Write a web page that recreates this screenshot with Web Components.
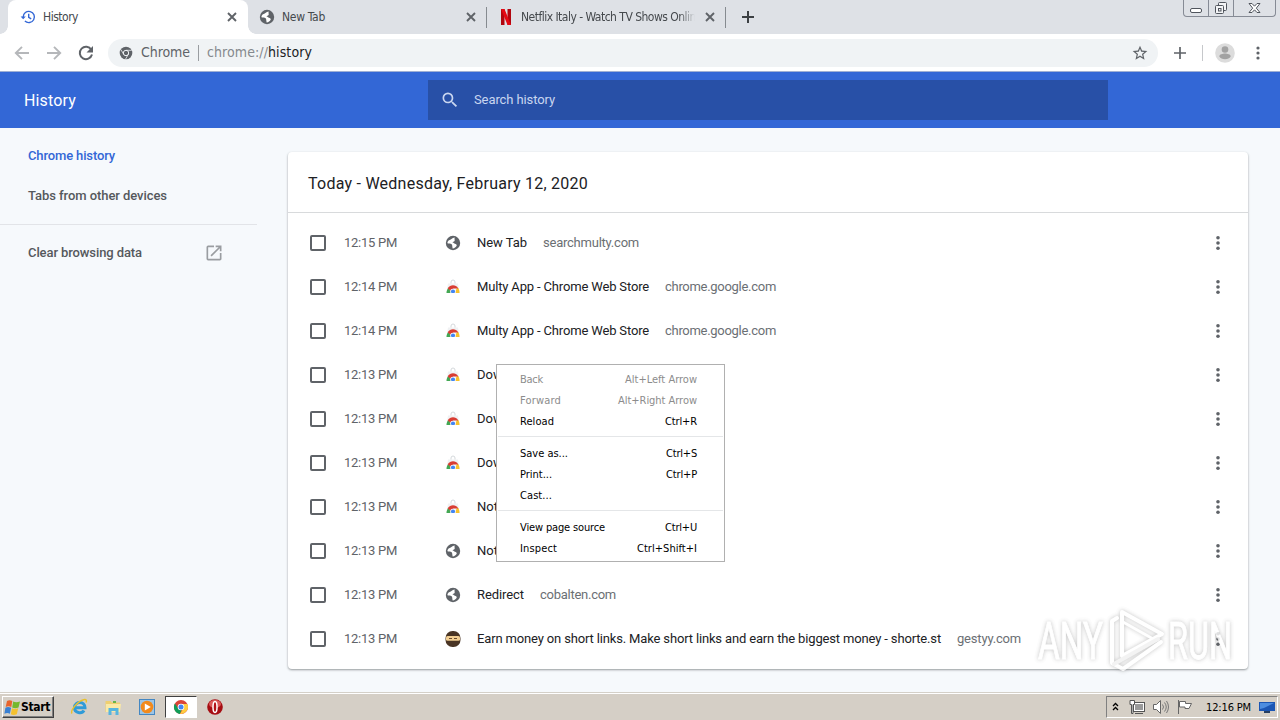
<!DOCTYPE html>
<html lang="en">
<head>
<meta charset="utf-8">
<title>History</title>
<style>
  html, body {
    margin: 0;
    height: 100%;
    overflow: hidden;
  }
</style>
</head>
<body>
<history-desktop></history-desktop>

<template id="history-desktop">
  <style>
    :host {
      display: flex;
      flex-direction: column;
      position: relative;
      width: 1280px;
      height: 720px;
      overflow: hidden;
      background: #f6f9fc;
      font-family: Roboto, sans-serif;
      font-size: 13px;
    }
    main {
      display: flex;
      flex: 1;
      min-height: 0;
    }
    context-menu {
      position: absolute;
      left: 496px;
      top: 364px;
    }
    water-mark {
      position: absolute;
      left: 1030px;
      top: 600px;
    }
  </style>
  <tab-strip></tab-strip>
  <tool-bar></tool-bar>
  <history-header></history-header>
  <main>
    <side-bar></side-bar>
    <history-card></history-card>
  </main>
  <task-bar></task-bar>
  <context-menu>
    <menu-entry disabled w="23" keys="Alt+Left Arrow" kw="72">Back</menu-entry>
    <menu-entry disabled w="41" keys="Alt+Right Arrow" kw="79">Forward</menu-entry>
    <menu-entry w="34" keys="Ctrl+R" kw="32">Reload</menu-entry>
    <hr>
    <menu-entry w="48" keys="Ctrl+S" kw="31">Save as...</menu-entry>
    <menu-entry w="32" keys="Ctrl+P" kw="31">Print...</menu-entry>
    <menu-entry w="32">Cast...</menu-entry>
    <hr>
    <menu-entry w="85" keys="Ctrl+U" kw="32">View page source</menu-entry>
    <menu-entry w="37" keys="Ctrl+Shift+I" kw="60">Inspect</menu-entry>
  </context-menu>
  <water-mark></water-mark>
</template>

<template id="tab-strip">
  <style>
    :host {
      display: flex;
      height: 34px;
      padding-left: 8px;
      background: #dee1e6;
      box-sizing: border-box;
    }
    .add {
      height: 34px;
      margin-left: 14px;
      color: #3c4043;
    }
    .buttons {
      display: flex;
      height: 16px;
      margin: 0 4px 0 auto;
      border: 1px solid #868b95;
      border-top: 0;
      border-radius: 0 0 4px 4px;
    }
    .buttons ui-icon + ui-icon {
      border-left: 1px solid #868b95;
    }
  </style>
  <browser-tab active icon="history" w="35">History</browser-tab>
  <browser-tab icon="globe" w="43">New Tab</browser-tab>
  <browser-tab icon="netflix" w="181">Netflix Italy - Watch TV Shows Online</browser-tab>
  <ui-icon class="add" name="plus" size="16"></ui-icon>
  <div class="buttons">
    <ui-icon name="minimize" size="24" h="16"></ui-icon>
    <ui-icon name="restore" size="24" h="16"></ui-icon>
    <ui-icon name="winclose" size="41" h="16"></ui-icon>
  </div>
</template>

<template id="browser-tab">
  <style>
    :host {
      display: flex;
      align-items: center;
      position: relative;
      width: 239px;
      height: 34px;
      padding: 0 7px 0 11px;
      box-sizing: border-box;
      color: #45494d;
      font: 12px "DejaVu Sans Condensed", "DejaVu Sans", sans-serif;
    }
    :host([active]) {
      width: 240px;
      padding: 0 8px 0 12px;
      background: #fff;
      border-radius: 8px 8px 0 0;
    }
    /* outward curves at the foot of the active tab */
    :host([active])::before,
    :host([active])::after {
      content: "";
      position: absolute;
      bottom: 0;
      left: -8px;
      width: 8px;
      height: 8px;
      background: radial-gradient(circle at 0 0, transparent 7.5px, #fff 8px);
    }
    :host([active])::after {
      left: auto;
      right: -8px;
      background: radial-gradient(circle at 100% 0, transparent 7.5px, #fff 8px);
    }
    :host(:not([active])) {
      border-right: 1px solid transparent;
      border-image: linear-gradient(transparent 8px, #868b90 8px, #868b90 27px, transparent 27px) 1;
    }
    .title {
      flex: 1;
      margin: 0 7px 0 7px;
      overflow: hidden;
      white-space: nowrap;
    }
    :host([icon="netflix"]) .title {
      -webkit-mask-image: linear-gradient(90deg, #000 91%, transparent);
      mask-image: linear-gradient(90deg, #000 91%, transparent);
    }
    .close {
      color: #5f6368;
    }
  </style>
  <ui-icon class="icon" size="16"></ui-icon>
  <div class="title"><fit-text><slot></slot></fit-text></div>
  <ui-icon class="close" name="close" size="16"></ui-icon>
</template>

<template id="tool-bar">
  <style>
    :host {
      display: flex;
      align-items: center;
      height: 38px;
      padding: 0 13px 0 13px;
      box-sizing: border-box;
      border-bottom: 1px solid #9fb0d4;
      background: #fff;
      color: #5f6368;
      font: 14px "DejaVu Sans Condensed", "DejaVu Sans", sans-serif;
    }
    .dim {
      color: #b5b7ba;
    }
    .gap {
      margin-left: 14px;
    }
    .omnibox {
      display: flex;
      align-items: center;
      flex: 1;
      height: 28px;
      margin: 0 13px 0 13px;
      padding: 0 10px 0 10px;
      border-radius: 14px;
      background: #f0f3f5;
      white-space: nowrap;
    }
    .omnibox fit-text {
      margin-top: -2px;
    }
    .omnibox fit-text:first-of-type {
      margin-left: 7px;
    }
    .sep {
      width: 1px;
      height: 16px;
      margin: 0 8px;
      background: #9a9da1;
    }
    .url {
      color: #85898d;
    }
    .path {
      color: #202124;
    }
    .star {
      margin-left: auto;
    }
    .line {
      width: 1px;
      height: 16px;
      margin: 0 12px 0 13px;
      background: #c6c8cb;
    }
  </style>
  <ui-icon class="dim" name="back" size="18"></ui-icon>
  <ui-icon class="dim gap" name="forward" size="18"></ui-icon>
  <ui-icon class="gap" name="reload" size="18"></ui-icon>
  <div class="omnibox">
    <ui-icon name="chromegrey" size="16"></ui-icon>
    <fit-text w="49">Chrome</fit-text>
    <span class="sep"></span>
    <fit-text class="url" w="61">chrome://</fit-text><fit-text class="path" w="44">history</fit-text>
    <ui-icon class="star" name="star" size="16"></ui-icon>
  </div>
  <ui-icon name="thinplus" size="18"></ui-icon>
  <span class="line"></span>
  <ui-icon name="avatar" size="20"></ui-icon>
  <ui-icon class="gap" name="dots" size="18"></ui-icon>
</template>

<template id="history-header">
  <style>
    :host {
      display: flex;
      align-items: center;
      height: 56px;
      background: #3367d6;
      color: #fff;
    }
    .title {
      width: 404px;
      padding-left: 24px;
      font-size: 16px;
    }
    .search {
      display: flex;
      align-items: center;
      width: 680px;
      height: 40px;
      padding-left: 12px;
      box-sizing: border-box;
      background: #2850a7;
      color: #c9d6f0;
    }
    .search fit-text {
      margin: -2px 0 0 14px;
    }
  </style>
  <div class="title"><fit-text w="52">History</fit-text></div>
  <div class="search">
    <ui-icon name="search" size="20"></ui-icon>
    <fit-text w="81">Search history</fit-text>
  </div>
</template>

<template id="side-bar">
  <style>
    :host {
      display: block;
      width: 257px;
      color: #55585c;
      font-weight: 500;
    }
    .item {
      display: flex;
      align-items: center;
      height: 40px;
      padding-left: 28px;
    }
    .item:first-of-type {
      margin-top: 8px;
      color: #3367d6;
    }
    .item fit-text {
      margin-top: -2px;
    }
    .rule {
      height: 1px;
      margin: 8px 0;
      background: #e2e4e8;
    }
    ui-icon {
      margin: 0 33px 0 auto;
      color: #9a9da1;
    }
  </style>
  <div class="item"><fit-text w="87">Chrome history</fit-text></div>
  <div class="item"><fit-text w="139">Tabs from other devices</fit-text></div>
  <div class="rule"></div>
  <div class="item"><fit-text w="114">Clear browsing data</fit-text><ui-icon name="launch" size="20"></ui-icon></div>
</template>

<template id="history-card">
  <style>
    :host {
      display: block;
      width: 960px;
      height: 517px;
      margin: 24px 0 0 31px;
      border-radius: 4px;
      background: #fff;
      box-shadow: 0 1px 2px rgba(60, 64, 67, .4), 0 1px 3px rgba(60, 64, 67, .15);
    }
    .heading {
      display: flex;
      align-items: center;
      height: 60px;
      padding: 3px 20px 0;
      box-sizing: border-box;
      color: #202124;
      font-size: 16px;
    }
    .rows {
      padding-top: 8px;
      border-top: 1px solid #d8dadc;
    }
  </style>
  <div class="heading"><fit-text w="280">Today - Wednesday, February 12, 2020</fit-text></div>
  <div class="rows">
    <history-item time="12:15 PM" icon="globe" w="50" site="searchmulty.com" sw="96">New Tab</history-item>
    <history-item time="12:14 PM" icon="webstore" w="172" site="chrome.google.com" sw="111">Multy App - Chrome Web Store</history-item>
    <history-item time="12:14 PM" icon="webstore" w="172" site="chrome.google.com" sw="111">Multy App - Chrome Web Store</history-item>
    <history-item time="12:13 PM" icon="webstore">Dow</history-item>
    <history-item time="12:13 PM" icon="webstore">Dow</history-item>
    <history-item time="12:13 PM" icon="webstore">Dow</history-item>
    <history-item time="12:13 PM" icon="webstore">Not</history-item>
    <history-item time="12:13 PM" icon="globe">Not</history-item>
    <history-item time="12:13 PM" icon="globe" w="47" site="cobalten.com" sw="76">Redirect</history-item>
    <history-item time="12:13 PM" icon="ninja" w="464" site="gestyy.com" sw="64">Earn money on short links. Make short links and earn the biggest money - shorte.st</history-item>
  </div>
</template>

<template id="history-item">
  <style>
    :host {
      display: flex;
      align-items: center;
      height: 44px;
      padding: 0 20px 0 22px;
      color: #202124;
      white-space: nowrap;
    }
    .box {
      width: 12px;
      height: 12px;
      border: 2px solid #5f6368;
      border-radius: 2px;
    }
    .time {
      width: 101px;
      margin: -2px 0 0 18px;
      color: #5f6368;
    }
    .name {
      margin: -2px 16px 0;
    }
    .site {
      margin-top: -2px;
      color: #6b6f74;
    }
    .more {
      margin-left: auto;
      color: #5f6368;
    }
  </style>
  <span class="box"></span>
  <span class="time"><fit-text w="53" class="clock"></fit-text></span>
  <ui-icon class="icon" size="16"></ui-icon>
  <fit-text class="name"><slot></slot></fit-text>
  <fit-text class="site"></fit-text>
  <ui-icon class="more" name="bigdots" size="20"></ui-icon>
</template>

<template id="context-menu">
  <style>
    :host {
      display: block;
      width: 229px;
      height: 198px;
      padding: 4px 1px;
      box-sizing: border-box;
      border: 1px solid #b0b0b0;
      background: #fff;
      color: #000;
      font: 11px "DejaVu Sans Condensed", "DejaVu Sans", sans-serif;
    }
    ::slotted(hr) {
      height: 1px;
      margin: 4px 0 6px;
      border: 0;
      background: #e4e6e8;
    }
  </style>
  <slot></slot>
</template>

<template id="menu-entry">
  <style>
    :host {
      display: flex;
      justify-content: space-between;
      align-items: center;
      height: 21px;
      padding: 0 26px 0 22px;
      white-space: nowrap;
    }
    :host([disabled]) {
      color: #8c8c8c;
    }
  </style>
  <fit-text class="name"><slot></slot></fit-text>
  <fit-text class="keys"></fit-text>
</template>

<template id="task-bar">
  <style>
    :host {
      display: flex;
      align-items: center;
      height: 28px;
      padding: 2px 2px 1px;
      box-sizing: border-box;
      border-top: 1px solid #d4d0c8;
      background: #d5cfc6;
      box-shadow: inset 0 1px #fff;
      color: #000;
      font: 11px "DejaVu Sans Condensed", "DejaVu Sans", sans-serif;
    }
    .start {
      display: flex;
      align-items: center;
      width: 52px;
      height: 22px;
      padding-left: 1px;
      box-sizing: border-box;
      border: 1px solid;
      border-color: #fff #404040 #404040 #fff;
      box-shadow: inset -1px -1px #808080;
      font-weight: bold;
      font-size: 12px;
    }
    .start fit-text {
      margin: -1px 0 0;
    }
    .apps {
      display: flex;
      margin-left: 9px;
    }
    .apps ui-icon {
      width: 32px;
      height: 22px;
      margin-right: 2px;
      box-sizing: border-box;
    }
    .apps .current {
      border: 1px solid;
      border-color: #404040 #fff #fff #404040;
      background: #fff;
    }
    .tray {
      display: flex;
      align-items: center;
      width: 172px;
      height: 22px;
      margin-left: auto;
      box-sizing: border-box;
      border: 1px solid;
      border-color: #808080 #fff #fff #808080;
    }
    .tray ui-icon {
      margin-left: 8px;
    }
    .tray .up {
      margin-left: 4px;
    }
    .tray .net {
      margin-left: 9px;
    }
    .tray fit-text {
      margin: 0 0 0 13px;
    }
  </style>
  <div class="start"><ui-icon name="windows" size="17"></ui-icon><fit-text w="29">Start</fit-text></div>
  <div class="apps">
    <ui-icon name="ie" size="18"></ui-icon>
    <ui-icon name="folder" size="18"></ui-icon>
    <ui-icon name="player" size="18"></ui-icon>
    <ui-icon class="current" name="chrome" size="16"></ui-icon>
    <ui-icon name="opera" size="18"></ui-icon>
  </div>
  <div class="tray">
    <ui-icon class="up" name="chevrons" size="9" h="16"></ui-icon>
    <ui-icon class="net" name="network" size="16"></ui-icon>
    <ui-icon name="speaker" size="16"></ui-icon>
    <ui-icon name="flag" size="16"></ui-icon>
    <fit-text w="45">12:16 PM</fit-text>
    <ui-icon name="desktop" size="16"></ui-icon>
  </div>
</template>

<template id="water-mark">
  <style>
    :host {
      display: block;
      width: 210px;
      height: 76px;
      filter: drop-shadow(0 0 2px rgba(90, 90, 90, .45));
      opacity: .8;
    }
    text {
      fill: #fff;
      stroke: #fff;
      stroke-width: 1;
      font: 52px "Liberation Sans Narrow", Roboto, sans-serif;
    }
  </style>
  <svg width="210" height="76" viewBox="0 0 210 76">
    <text x="8" y="59" textLength="65" lengthAdjust="spacingAndGlyphs">ANY</text>
    <g fill="none" stroke="#fff" stroke-width="4" stroke-linejoin="round" stroke-linecap="round">
      <path d="M87 18l-5 3V63l11 6 38-27"/>
      <path d="M92 56V12L132 34 92 56"/>
      <path d="M93 22L125 40" stroke-width="3"/>
      <path d="M84 64L128 39" stroke="#f1f1f1"/>
    </g>
    <text x="138" y="59" textLength="64" lengthAdjust="spacingAndGlyphs">RUN</text>
  </svg>
</template>

<script>
  // viewBox followed by the markup of each icon
  const ICONS = {
    history: ['0 0 16 16', '<g fill="none" stroke="#3367d6" stroke-width="1.4"><path d="M3.2 8a5.6 5.6 0 1 1 1.7 4"/><path d="M8.7 4.8v3.5l2.5 1.5"/></g><path fill="#3367d6" d="M.6 7.5h5.2L3.2 10.2z"/>'],
    globe: ['0 0 24 24', '<circle cx="12" cy="12" r="10.8" fill="#5f6368"/><path fill="#fff" d="M14.500 3.600C10.500 4 9.500 6.500 7 7.500c-2.500 1-3.500 3-3.300 5 2.300.9 4.500.2 6.300 1.500 1.200 1 .6 3 1.500 6.200 2.500-.2 5-1.700 6-4 .5-1.700-.8-3-2.800-3.200-1.500-.2-2-1.500-3.700-2 1-1.200 2.300-.8 3.300-2 .9-1.200-.5-2.500.2-5.400z"/>'],
    netflix: ['0 0 16 16', '<path fill="#b1060f" d="M3 0h3.500v16H3zM9.500 0H13v16H9.500z"/><path fill="#e50914" d="M3 0h3.500L13 16H9.500z"/>'],
    close: ['0 0 16 16', '<path fill="none" stroke="currentColor" stroke-width="1.900" d="M4 4l8 8M12 4l-8 8"/>'],
    plus: ['0 0 16 16', '<path fill="none" stroke="currentColor" stroke-width="2" d="M8 2v12M2 8h12"/>'],
    thinplus: ['0 0 18 18', '<path fill="none" stroke="currentColor" stroke-width="1.700" d="M9 3v12M3 9h12"/>'],
    minimize: ['0 0 24 16', '<rect x="6.500" y="8.500" width="11" height="4" rx="1.500" fill="#fff" stroke="#50555d"/>'],
    restore: ['0 0 24 16', '<g fill="#f3f4f6" stroke="#50555d"><rect x="9.500" y="2.500" width="8" height="8" rx="1"/><rect x="6.500" y="5.500" width="8" height="8" rx="1"/><rect x="9.500" y="8.500" width="2.500" height="2.500"/></g>'],
    winclose: ['0 0 41 16', '<path fill="#fff" stroke="#50555d" d="M15 3.500h3l2.500 2.700L23 3.500h3l-3.700 4.700L26 12.500h-3l-2.500-2.700-2.500 2.700h-3l3.700-4.300z"/>'],
    back: ['0 0 18 18', '<path fill="none" stroke="currentColor" stroke-width="1.900" d="M16 9H3.500M9 2.800L2.800 9 9 15.200"/>'],
    forward: ['0 0 18 18', '<path fill="none" stroke="currentColor" stroke-width="1.900" d="M2 9h12.500M9 2.800L15.200 9 9 15.200"/>'],
    reload: ['0 0 18 18', '<path fill="none" stroke="currentColor" stroke-width="2" d="M14.300 5.700A6.200 6.200 0 1 0 15 10.600"/><path fill="currentColor" d="M16 2v6.500H9.500z"/>'],
    chromegrey: ['0 0 16 16', '<circle cx="8" cy="8" r="6.300" fill="#5f6368"/><circle cx="8" cy="8" r="2.700" fill="#5f6368" stroke="#f0f3f5" stroke-width="1"/><path fill="none" stroke="#f0f3f5" stroke-width=".8" d="M8 5.300h5.700M5.700 9.300L2.800 4.500M10.300 9.300L7.500 14.200"/>'],
    star: ['0 0 24 24', '<path fill="currentColor" d="M23 9.100l-7.900-.7L12 1 8.900 8.400 1 9.100l6 5.200L5.200 22l6.800-4.100 6.800 4.100-1.800-7.700zM12 15.800l-4.100 2.500L9 13.600 5.400 10.400l4.800-.4L12 5.600l1.800 4.400 4.800.4L15 13.600l1.100 4.700z"/>'],
    avatar: ['0 0 20 20', '<circle cx="10" cy="10" r="9.800" fill="#dcdcdc"/><circle cx="10" cy="6.500" r="3.300" fill="#a2a2a2"/><path fill="#a2a2a2" d="M4.300 13.500c0-2 3.500-2.900 5.700-2.900s5.700.9 5.700 2.900c-1.200 1.700-3 2.700-5.700 2.700s-4.500-1-5.700-2.700z"/>'],
    dots: ['0 0 18 18', '<g fill="currentColor"><circle cx="9" cy="4" r="1.600"/><circle cx="9" cy="9" r="1.600"/><circle cx="9" cy="14" r="1.600"/></g>'],
    bigdots: ['0 0 20 20', '<g fill="currentColor"><circle cx="10" cy="4.800" r="1.800"/><circle cx="10" cy="10" r="1.800"/><circle cx="10" cy="15.200" r="1.800"/></g>'],
    search: ['0 0 24 24', '<path fill="currentColor" d="M15.500 14h-.79l-.28-.27A6.470 6.470 0 0 0 16 9.500 6.500 6.500 0 1 0 9.500 16c1.610 0 3.090-.59 4.230-1.570l.27.28v.79l5 4.990L20.490 19l-4.990-5zm-6 0C7.010 14 5 11.990 5 9.500S7.010 5 9.500 5 14 7.010 14 9.500 11.990 14 9.500 14z"/>'],
    launch: ['0 0 24 24', '<path fill="currentColor" d="M19 19H5V5h7V3H5a2 2 0 0 0-2 2v14a2 2 0 0 0 2 2h14c1.100 0 2-.9 2-2v-7h-2v7zM14 3v2h3.590l-9.830 9.830 1.410 1.410L19 6.410V10h2V3h-7z"/>'],
    webstore: ['0 0 16 16', '<path fill="#f0f1f3" d="M3 4.500h10l1.500 9.500h-13z"/><path fill="none" stroke="#d5d9dc" d="M6 4.500V3a2 2 0 0 1 4 0v1.500"/><path fill="#43a854" d="M3.300 9L7 14H1.500c0-2 .7-4 1.800-5z"/><path fill="#f7c22c" d="M12 9h1.300c.8 1.500 1.200 3 1.200 5H9.500z"/><path fill="#d93c32" d="M2.700 9.300C4 7 6 6.200 8 6.200s4.200.8 5.300 3.200H8.500L5.500 12z"/><circle cx="8" cy="12.500" r="2.800" fill="#fff"/><circle cx="8" cy="12.500" r="2.100" fill="#4285f4"/><path fill="#fff" d="M1 14h14v2H1z"/>'],
    ninja: ['0 0 16 16', '<rect x=".5" y="0" width="15" height="16" rx="7" fill="#4a3525"/><rect x="1" y="5" width="14" height="4.800" rx="1.500" fill="#f3cf93"/><path stroke="#6b4a2c" d="M4 7.500h3M9 7.500h3"/>'],
    windows: ['0 0 17 17', '<path fill="#e8642c" d="M3 2q2.500-1.500 5.300 0l-1 6q-2.800-1.500-5.600 0z"/><path fill="#75b82c" d="M9.200 2.500q2.800 1.500 6.800 0l-1.500 6q-3.500 1.500-6.300 0z"/><path fill="#3a80d2" d="M1.400 8.800q2.500-1.500 5.700 0l-1.200 6q-2.500-1.500-5.500 0z"/><path fill="#f4c12f" d="M8 9.300q2.700 1.500 6.200 0l-1.400 6q-3.200 1.500-6 0z"/>'],
    ie: ['0 0 18 18', '<path fill="none" stroke="#2f9bd8" stroke-width="3" d="M4 9.800h11c0-7-10-7.200-10.500-.5-.3 6 7.500 6.800 9.500 3.200"/><path fill="none" stroke="#e8c02c" stroke-width="1.400" d="M2 15.500c-2-3 6-13 12.500-14 2-.2 2.300 1.300 1.500 3"/>'],
    folder: ['0 0 18 18', '<path fill="#efcf70" d="M1.500 3h5l1.500 1.500h8V14h-14.500z"/><path fill="#fae9a6" d="M2 6h15l-1 8H2z"/><path fill="#56b5de" d="M4.500 10h10v7h-3v-4h-4v4h-3z"/><path fill="#67b54a" d="M9 3h3v2H9z"/>'],
    player: ['0 0 18 18', '<rect x="1.500" y="1.500" width="15" height="15" fill="#9cc5e6" stroke="#4487c2"/><circle cx="9" cy="9" r="6.300" fill="#f28a1c"/><path fill="#fff" d="M6.800 5.500l6 3.500-6 3.500z"/>'],
    chrome: ['0 0 16 16', '<circle cx="8" cy="8" r="7" fill="#db4437"/><path fill="#0f9d58" d="M1.900 4.500l4 6 2.500.5L6.900 15A7 7 0 0 1 1.900 4.500z"/><path fill="#ffcd40" d="M8 5h6.300A7 7 0 0 1 7 14.900L10.500 9z"/><circle cx="8" cy="8" r="3.300" fill="#fff"/><circle cx="8" cy="8" r="2.500" fill="#4285f4"/>'],
    opera: ['0 0 18 18', '<circle cx="9" cy="9" r="7.800" fill="#a60d12"/><ellipse cx="9" cy="6" rx="6" ry="4" fill="#dc5a5a"/><ellipse cx="9" cy="9" rx="2" ry="5.500" fill="#b31217" stroke="#fff" stroke-width="1.500"/>'],
    chevrons: ['0 0 9 16', '<path fill="none" stroke="#000" stroke-width="1.300" d="M2 7l2.500-2.500L7 7M2 11l2.500-2.500L7 11"/>'],
    network: ['0 0 16 16', '<rect x="4.500" y="3.500" width="11" height="9" fill="#fff" stroke="#555"/><path fill="#9a9a9a" d="M6 5h8v6H6z"/><path stroke="#555" d="M6 14.500h8"/><path fill="#fff" stroke="#555" d="M1 1.500h4.500v4H4v9H2.500v-9H1z"/>'],
    speaker: ['0 0 16 16', '<path fill="#fff" stroke="#666" d="M.5 5.500h3l4-4v13l-4-4h-3z"/><path fill="none" stroke="#777" d="M9.500 5.500q2 2.500 0 5M11.500 3.500q3.500 4.500 0 9M13.500 2q4 6 0 12"/>'],
    flag: ['0 0 16 16', '<path fill="#fff" stroke="#666" d="M1.500 1v14M2.500 2.500h6v2h6l-2.500 5H8v-1.500H2.500z"/>'],
    desktop: ['0 0 16 16', '<path fill="#1b56b4" d="M0 3h16v9H0z"/><path fill="#4c8de0" d="M1 4h14L5 9 1 10z"/><path fill="#273f62" d="M5 12h6v2H5z"/>']
  };

  // Clones the template with the same id as the tag into the shadow root
  class TemplateElement extends HTMLElement {
    constructor() {
      super();
      const template = document.getElementById(this.localName);
      this.attachShadow({mode: 'open'}).appendChild(document.importNode(template.content, true));
    }

    find(selector) {
      return this.shadowRoot.querySelector(selector);
    }
  }

  class UiIcon extends HTMLElement {
    static get observedAttributes() {
      return ['name'];
    }

    constructor() {
      super();
      this.attachShadow({mode: 'open'});
    }

    connectedCallback() {
      this.render();
    }

    attributeChangedCallback() {
      this.render();
    }

    render() {
      const icon = ICONS[this.getAttribute('name')];
      if (!icon) return;
      const width = this.getAttribute('size');
      const height = this.getAttribute('h') || width;
      this.shadowRoot.innerHTML = `
        <style>
          :host { display: flex; flex: none; align-items: center; justify-content: center; }
        </style>
        <svg width="${width}" height="${height}" viewBox="${icon[0]}">${icon[1]}</svg>`;
    }
  }

  // Spreads its text over the number of pixels given in "w"
  class FitText extends HTMLElement {
    constructor() {
      super();
      this.attachShadow({mode: 'open'}).innerHTML = `
        <style>
          :host { display: inline-block; white-space: nowrap; }
        </style>
        <slot></slot>`;
    }

    fit(text) {
      const target = Number(this.getAttribute('w'));
      if (!target || !text) return;
      this.style.letterSpacing = '0';
      const width = this.getBoundingClientRect().width;
      this.style.letterSpacing = (target - width) / text.length + 'px';
    }

    connectedCallback() {
      if (!this.querySelector('slot')) this.fit(this.textContent);
    }
  }

  class BrowserTab extends TemplateElement {
    connectedCallback() {
      this.find('.icon').setAttribute('name', this.getAttribute('icon'));
      const title = this.find('fit-text');
      title.setAttribute('w', this.getAttribute('w'));
      title.fit(this.textContent);
    }
  }

  class HistoryItem extends TemplateElement {
    connectedCallback() {
      this.find('.icon').setAttribute('name', this.getAttribute('icon'));
      const clock = this.find('.clock');
      clock.textContent = this.getAttribute('time');
      clock.fit(clock.textContent);
      const name = this.find('.name');
      name.setAttribute('w', this.getAttribute('w') || '');
      name.fit(this.textContent);
      const site = this.find('.site');
      site.textContent = this.getAttribute('site') || '';
      site.setAttribute('w', this.getAttribute('sw') || '');
      site.fit(site.textContent);
    }
  }

  class MenuEntry extends TemplateElement {
    connectedCallback() {
      const name = this.find('.name');
      name.setAttribute('w', this.getAttribute('w'));
      name.fit(this.textContent);
      const keys = this.find('.keys');
      keys.textContent = this.getAttribute('keys') || '';
      keys.setAttribute('w', this.getAttribute('kw') || '');
      keys.fit(keys.textContent);
    }
  }

  customElements.define('ui-icon', UiIcon);
  customElements.define('fit-text', FitText);
  customElements.define('browser-tab', BrowserTab);
  customElements.define('history-item', HistoryItem);
  customElements.define('menu-entry', MenuEntry);
  for (const tag of ['tab-strip', 'tool-bar', 'history-header', 'side-bar', 'history-card', 'context-menu', 'task-bar', 'water-mark', 'history-desktop']) {
    customElements.define(tag, class extends TemplateElement {});
  }
</script>
</body>
</html>
